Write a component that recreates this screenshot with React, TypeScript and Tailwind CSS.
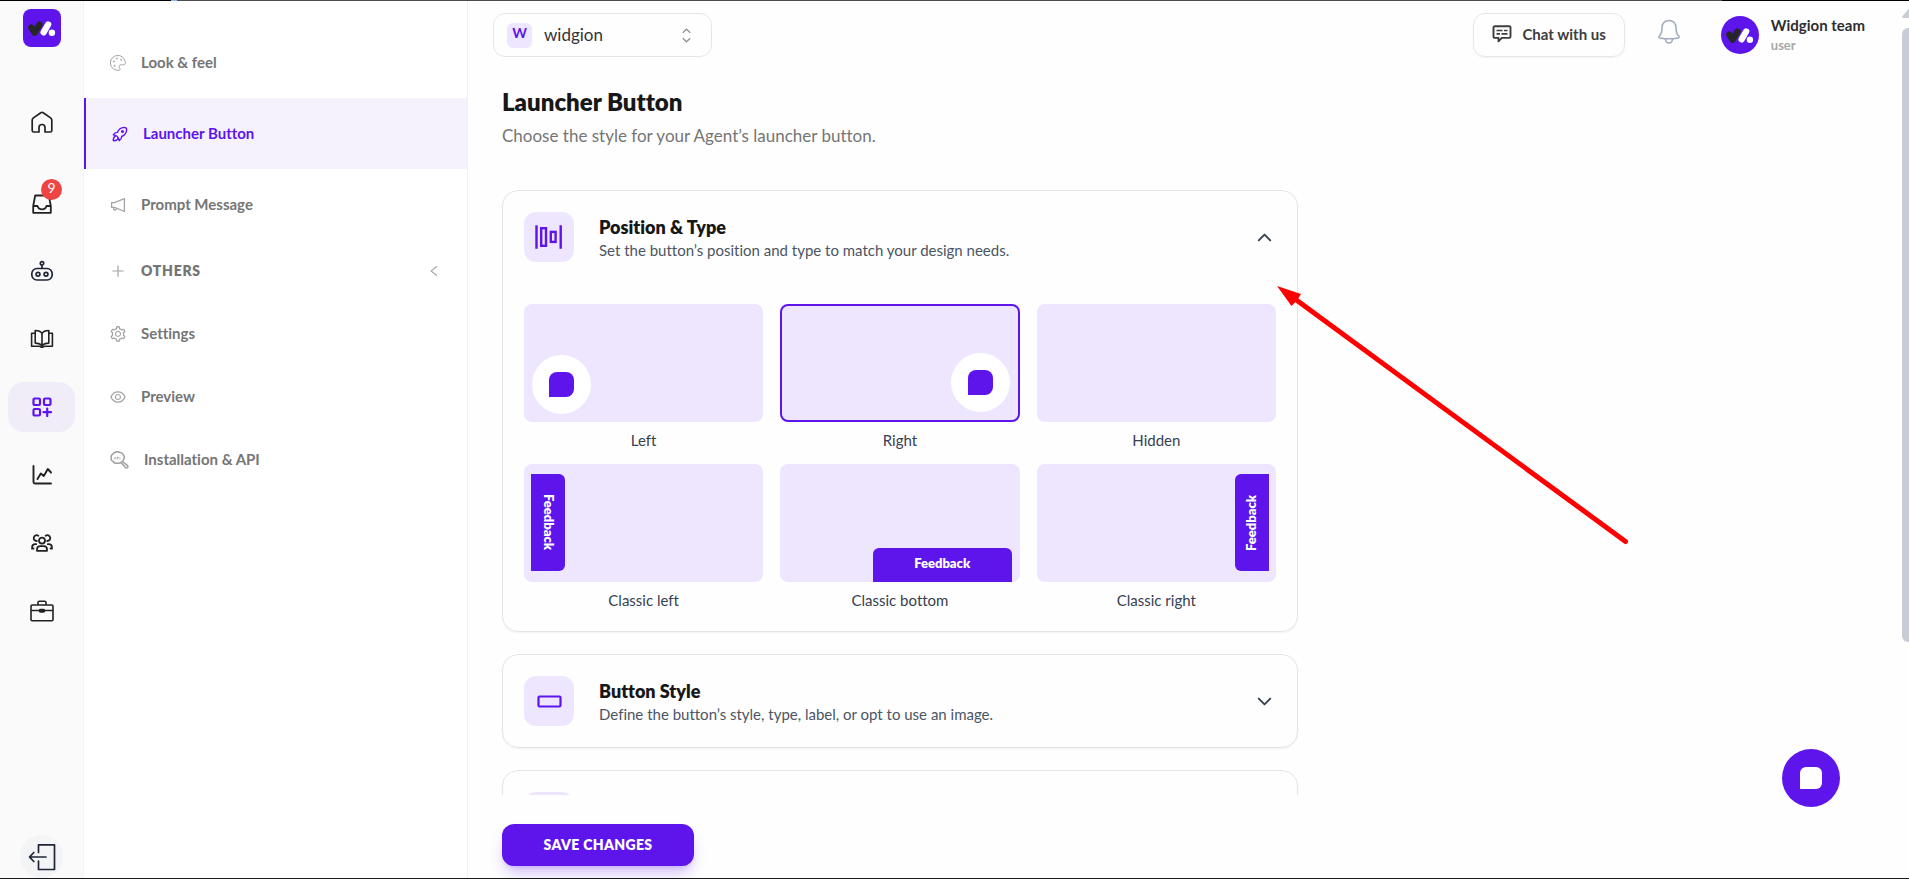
import * as React from "react";
import clsx from "clsx";
import { ChevronDown, ChevronUp } from "lucide-react";
import {
  AiOutlineEye,
  AiOutlineLeft,
  AiOutlineNotification,
  AiOutlinePlus,
  AiOutlineSetting,
} from "react-icons/ai";
import { TbRocket } from "react-icons/tb";

type Position = "left" | "right" | "hidden" | "classic-left" | "classic-bottom" | "classic-right";

function LogoGlyph() {
  return (
    <svg viewBox="0 0 38 38" className="size-full" fill="none" strokeLinecap="round" strokeLinejoin="round">
      <path d="M8.3 18.500l3.400 5.200 4.700-8.200" stroke="#262626" strokeWidth="6.200" />
      <path d="M25.2 15.4l-4.6 8" stroke="#fff" strokeWidth="6.2" />
      <circle cx="28.9" cy="23.8" r="3.2" fill="#fff" />
    </svg>
  );
}

function HomeIcon() {
  return (
    <svg width="24" height="24" viewBox="0 0 24 24" fill="none" stroke="currentColor" strokeWidth="1.7" strokeLinejoin="round">
      <path d="M9 22v-4.5a3 3 0 0 1 6 0V22h5.2a1.6 1.6 0 0 0 1.6-1.6V10.2c0-1-.4-1.7-1.2-2.3L13.2 2.7a2 2 0 0 0-2.4 0L3.4 7.900c-.8.6-1.2 1.3-1.2 2.300v10.200A1.600 1.600 0 0 0 3.800 22z" />
    </svg>
  );
}

function InboxIcon() {
  return (
    <svg width="20" height="20" viewBox="0 0 20 20" fill="none" stroke="currentColor" strokeWidth="1.8" strokeLinejoin="round">
      <path d="M1.2 12L3.2 1.5h13.6l2 10.5v6.8H1.2z" />
      <path d="M1.2 12h4.3c.6 2.3 2.2 3.3 4.5 3.3s3.900-1 4.500-3.300h4.300" />
    </svg>
  );
}

function RobotIcon() {
  return (
    <svg width="24" height="22" viewBox="0 0 24 22" fill="none" stroke="#1f2438" strokeWidth="1.7">
      <rect x="1.8" y="8.5" width="20.4" height="11.5" rx="5.2" />
      <circle cx="8" cy="14.3" r="1.9" />
      <circle cx="16" cy="14.3" r="1.9" />
      <circle cx="12" cy="3.3" r="1.7" />
      <path d="M12 5v3.5" />
    </svg>
  );
}

function BookIcon() {
  return (
    <svg width="24" height="20" viewBox="0 0 24 20" fill="none" stroke="currentColor" strokeWidth="1.6" strokeLinejoin="round">
      <path d="M12 4.5C11 2.6 9 1.5 5.2 1.5v12.6c3.6 0 5.8.8 6.8 3.2 1-2.4 3.2-3.2 6.8-3.2V1.5C15 1.5 13 2.6 12 4.5zM12 4.5v12.8" />
      <path d="M5.2 4.3H1.6v13h7.6c1.2 0 1.6 1 2.8 1s1.6-1 2.8-1h7.6v-13h-3.6" />
    </svg>
  );
}

function WidgetsIcon() {
  return (
    <svg width="20" height="20" viewBox="0 0 20 20" fill="none" stroke="currentColor" strokeWidth="2.2">
      <rect x="1.5" y="1.5" width="6.5" height="6.5" rx="1.2" />
      <rect x="12" y="1.5" width="6.5" height="6.5" rx="1.2" />
      <rect x="1.5" y="12" width="6.5" height="6.5" rx="1.2" />
      <path d="M15.2 11.5v7.5M11.5 15.2H19" strokeLinecap="round" />
    </svg>
  );
}

function ChartIcon() {
  return (
    <svg width="20" height="20" viewBox="0 0 20 20" fill="none" stroke="currentColor" strokeWidth="1.9" strokeLinecap="round" strokeLinejoin="round">
      <path d="M1.5 1v16a1.5 1.5 0 0 0 1.5 1.5h16" />
      <path d="M5.5 14l3.3-5.5 3 2.5 4-7 3.2 3.5" />
    </svg>
  );
}

function UsersIcon() {
  return (
    <svg width="22" height="18" viewBox="0 0 22 18" fill="none" stroke="currentColor" strokeWidth="1.8" strokeLinecap="round">
      <circle cx="11" cy="6.6" r="3" />
      <path d="M6 16.8v-1.3c0-2 1.5-3.3 3.3-3.3h3.4c1.8 0 3.3 1.3 3.3 3.3v1.3z" strokeLinejoin="round" />
      <path d="M5.8 7a2.9 2.9 0 1 1 1.5-5.3M16.2 7a2.9 2.9 0 1 0-1.5-5.3" />
      <path d="M5.2 10.2H4.3c-1.9 0-3.2 1.3-3.2 3.3v1h1.4M16.8 10.2h.9c1.9 0 3.2 1.3 3.2 3.3v1h-1.4" />
    </svg>
  );
}

function BriefcaseIcon() {
  return (
    <svg width="24" height="22" viewBox="0 0 24 22" fill="none" stroke="currentColor" strokeWidth="1.6" strokeLinejoin="round">
      <rect x="1" y="5" width="22" height="15.8" rx="1.2" />
      <path d="M8 5V2.5A1.2 1.2 0 0 1 9.2 1.3h5.6A1.2 1.2 0 0 1 16 2.5V5M1 10.5h22" />
      <rect x="9.5" y="9.5" width="5" height="2.5" rx="1" fill="currentColor" />
    </svg>
  );
}

function LogoutIcon() {
  return (
    <svg width="28" height="28" viewBox="0 0 28 28" fill="none" stroke="#1f2438" strokeWidth="1.7" strokeLinecap="round" strokeLinejoin="round">
      <path d="M10.5 9.5V1.8h16v24.7h-16V18" />
      <path d="M18 14H1.5M5.8 9.5L1.5 14l4.300 4.500" />
    </svg>
  );
}

function PaletteIcon() {
  return (
    <svg width="16" height="16" viewBox="0 0 16 16" fill="none" stroke="currentColor" strokeWidth="1">
      <path d="M15.4 7.5A7.5 7.5 0 1 0 9.3 15.3c1-.2 1-1.1.5-1.9-.9-1.5-.8-3 .9-3.6 1.3-.4 2.5.5 3.6-.1.7-.4 1.1-1.2 1.1-2.2z" />
      <circle cx="7" cy="3.5" r=".6" />
      <circle cx="11.2" cy="4.8" r=".6" />
      <circle cx="3.8" cy="6.5" r=".6" />
      <circle cx="4.5" cy="10.8" r=".6" />
    </svg>
  );
}

function ApiIcon() {
  return (
    <svg width="19" height="18" viewBox="0 0 19 18" fill="none" stroke="currentColor" strokeWidth="1.6" strokeLinejoin="round">
      <path d="M5 1.5c1.500-1.100 3.200-1.100 4.600 0 1.700-.2 3 .5 3.600 2 1.300 1.500 1.400 3 .6 4.500-.1 1.500-.9 2.500-2.300 3-1.300 1.300-2.800 1.600-4.300 1-1.700.5-3.200 0-4-1.500C1.400 9.700.7 8.200 1.200 6.700.9 5 1.500 3.700 2.900 3 3.300 2 4 1.500 5 1.500z" />
      <path d="M11.3 11.7l4.3 5c1.500 1 3-.7 1.900-2l-5-4.200" />
      <path d="M4.3 8.3l.9-2.3.9 2.3M7.2 8.3V6h1v1.2h-1M9.9 6v2.3" strokeWidth=".7" />
    </svg>
  );
}

function ChatIcon() {
  return (
    <svg width="20" height="18" viewBox="0 0 20 18" fill="none" stroke="currentColor" strokeWidth="1.9" strokeLinejoin="round">
      <path d="M2.8 1.3h14.4c.8 0 1.3.5 1.3 1.3v9c0 .8-.5 1.3-1.3 1.3H9.8L6.5 16.3v-3.4H2.8c-.8 0-1.3-.5-1.3-1.3v-9c0-.8.5-1.3 1.3-1.3z" />
      <path d="M4.5 5.5h6M12 5.5h3.5M4.5 8.8h3.5M9.5 8.8h6" strokeWidth="1.7" />
    </svg>
  );
}

function BellIcon() {
  return (
    <svg width="24" height="26" viewBox="0 0 24 26" fill="none" stroke="currentColor" strokeWidth="1.5" strokeLinejoin="round">
      <path d="M12 1.5c-4.3 0-7 3.2-7 7.3 0 4.5-.8 6.5-2.6 8.2-.9.9-.7 1.7.3 1.900 5.800 1.100 12.800 1.100 18.600 0 1-.2 1.200-1 .3-1.900-1.800-1.700-2.600-3.700-2.600-8.200 0-4.100-2.700-7.300-7-7.300z" />
      <path d="M8.500 20c.2 2.500 1.600 4 3.500 4s3.300-1.500 3.500-4" />
    </svg>
  );
}

function SelectorIcon() {
  return (
    <svg width="9" height="15" viewBox="0 0 9 15" fill="none" stroke="currentColor" strokeWidth="1.2">
      <path d="M.8 4.800L4.500 1.200l3.700 3.600M.8 10.200l3.700 3.600 3.700-3.600" />
    </svg>
  );
}

function PositionIcon() {
  return (
    <svg width="28" height="24" viewBox="0 0 28 24" fill="none" stroke="currentColor" strokeWidth="2.4">
      <path d="M1.5.3v23.4M25.7.3v23.4" />
      <rect x="6.2" y="3.2" width="4.8" height="17.6" />
      <rect x="15.8" y="6.900" width="4.8" height="10" />
    </svg>
  );
}

function ButtonIcon() {
  return (
    <svg width="25" height="13" viewBox="0 0 25 13" fill="none" stroke="currentColor" strokeWidth="2.2">
      <rect x="1.5" y="1.5" width="22" height="10" rx="1" />
    </svg>
  );
}

const railItems = [
  { label: "Knowledge", icon: <BookIcon /> },
  { label: "Widgets", icon: <WidgetsIcon />, active: true },
  { label: "Analytics", icon: <ChartIcon /> },
  { label: "Contacts", icon: <UsersIcon /> },
  { label: "Workspace", icon: <BriefcaseIcon /> },
];

const positions: { id: Position; label: string }[] = [
  { id: "left", label: "Left" },
  { id: "right", label: "Right" },
  { id: "hidden", label: "Hidden" },
  { id: "classic-left", label: "Classic left" },
  { id: "classic-bottom", label: "Classic bottom" },
  { id: "classic-right", label: "Classic right" },
];

function RailButton({ label, active, children }: { label: string; active?: boolean; children: React.ReactNode }) {
  return (
    <button
      type="button"
      aria-label={label}
      className={clsx(
        "relative flex h-[50px] w-[67px] shrink-0 items-center justify-center rounded-2xl",
        active ? "bg-[#f0edf9] text-[#5d15eb]" : "text-[#222]"
      )}
    >
      {children}
    </button>
  );
}

function Rail() {
  return (
    <nav className="flex w-[84px] shrink-0 flex-col items-center border-r border-[#f3f3f4] bg-[#fafafa] pt-2">
      <a href="#" aria-label="Widgion" className="size-[38px] shrink-0 overflow-hidden rounded-lg bg-[#5d15eb]">
        <LogoGlyph />
      </a>
      <div className="mt-[50px] flex flex-col items-center gap-8">
        <RailButton label="Home">
          <HomeIcon />
        </RailButton>
        <RailButton label="Inbox">
          <InboxIcon />
          <span className="absolute top-0 left-[33px] flex size-[21px] items-center justify-center rounded-full bg-[#ef4444] pb-1 text-sm text-white">
            9
          </span>
        </RailButton>
      </div>
      <div className="mt-[17px] flex flex-col gap-[18px]">
        <RailButton label="Agents">
          <RobotIcon />
        </RailButton>
        {railItems.map((item) => (
          <RailButton key={item.label} label={item.label} active={item.active}>
            {item.icon}
          </RailButton>
        ))}
      </div>
      <button
        type="button"
        aria-label="Log out"
        className="mt-auto flex size-[43px] shrink-0 items-center justify-center rounded-full bg-[#f3f4f6]"
      >
        <LogoutIcon />
      </button>
    </nav>
  );
}

function MenuLink({
  icon,
  active,
  compact,
  children,
}: {
  icon: React.ReactNode;
  active?: boolean;
  compact?: boolean;
  children: React.ReactNode;
}) {
  return (
    <a
      href="#"
      className={clsx(
        "flex items-center gap-[15px] pl-[26px] text-[15px] font-bold",
        compact ? "h-[63px] pb-0.5" : "h-[71px]",
        active ? "border-l-2 border-[#5d15eb] bg-[#f5f2fd] text-[#5d15eb]" : "text-[#757575]"
      )}
    >
      <span className={active ? "text-[#5d15eb]" : "text-[#a3a3a3]"}>{icon}</span>
      {children}
    </a>
  );
}

function SideMenu() {
  return (
    <aside className="w-[384px] shrink-0 border-r border-[#f1f1f2] bg-white pt-[26px]">
      <MenuLink icon={<PaletteIcon />}>Look &amp; feel</MenuLink>
      <MenuLink icon={<TbRocket size={20} strokeWidth={1.7} className="-mx-0.5" />} active>
        Launcher Button
      </MenuLink>
      <MenuLink icon={<AiOutlineNotification size={18} className="-mx-px" />}>Prompt Message</MenuLink>
      <button
        type="button"
        className="flex h-[63px] w-full items-center gap-[15px] pr-[26px] pb-0.5 pl-[26px] text-sm font-extrabold tracking-wider text-[#757575]"
      >
        <AiOutlinePlus size={16} className="text-[#a3a3a3]" />
        OTHERS
        <AiOutlineLeft size={14} className="ml-auto text-[#a3a3a3]" />
      </button>
      <MenuLink compact icon={<AiOutlineSetting size={18} className="-mx-px" />}>
        Settings
      </MenuLink>
      <MenuLink compact icon={<AiOutlineEye size={18} className="-mx-px" />}>
        Preview
      </MenuLink>
      <MenuLink compact icon={<ApiIcon />}>
        Installation &amp; API
      </MenuLink>
    </aside>
  );
}

function Header() {
  return (
    <header className="flex h-[68px] shrink-0 items-center pr-11 pl-[25px]">
      <button
        type="button"
        className="flex h-11 w-[219px] items-center rounded-xl border border-[#e6e6e8] pr-5 pl-[13px] text-[17px] text-[#333]"
      >
        <span className="mr-3 flex size-[25px] items-center justify-center rounded-md bg-[#eee6ff] pb-1 text-sm font-bold text-[#5d15eb]">
          W
        </span>
        widgion
        <span className="ml-auto text-[#8f8f94]">
          <SelectorIcon />
        </span>
      </button>
      <button
        type="button"
        className="ml-auto flex h-11 items-center gap-[10px] rounded-xl border border-[#e6e6e8] px-[18px] pb-0.5 text-[15px] font-bold text-[#3d3d3d] shadow-xs"
      >
        <ChatIcon />
        Chat with us
      </button>
      <button type="button" aria-label="Notifications" className="ml-8 pb-[6px] text-[#a0aabb]">
        <BellIcon />
      </button>
      <a href="#" className="ml-10 flex items-center gap-3">
        <span className="size-[38px] overflow-hidden rounded-full bg-[#5d15eb]">
          <LogoGlyph />
        </span>
        <span className="flex flex-col gap-0.5 pb-0.5">
          <span className="text-[15px] leading-5 font-bold text-[#2e2e2e]">Widgion team</span>
          <span className="text-[13px] leading-4 font-bold text-[#a8a8a8]">user</span>
        </span>
      </a>
    </header>
  );
}

function SectionHeader({
  icon,
  title,
  description,
  open,
}: {
  icon: React.ReactNode;
  title: string;
  description: string;
  open?: boolean;
}) {
  const Chevron = open ? ChevronUp : ChevronDown;
  return (
    <button type="button" aria-expanded={!!open} className="flex w-full items-center text-left">
      <span className="mr-[25px] flex size-[50px] items-center justify-center rounded-xl bg-[#eee6ff] text-[#5d15eb]">
        {icon}
      </span>
      <span className="flex flex-1 flex-col pt-[3px]">
        <span className="text-lg leading-6 font-extrabold text-[#171717]">{title}</span>
        <span className="text-[15px] leading-[23px] text-[#4b5563]">{description}</span>
      </span>
      <Chevron className="size-[23px] text-[#374151]" />
    </button>
  );
}

function Bubble() {
  return (
    <span className="flex size-[59px] items-center justify-center rounded-full bg-white">
      <span className="size-[25px] rounded-lg rounded-bl-none bg-[#5d15eb]" />
    </span>
  );
}

function PositionPreview({ id }: { id: Position }) {
  const tag = "flex items-center justify-center bg-[#5d15eb] text-[13px] font-extrabold text-white";
  switch (id) {
    case "left":
      return (
        <span className="flex size-full items-end p-2">
          <Bubble />
        </span>
      );
    case "right":
      return (
        <span className="flex size-full items-end justify-end p-2">
          <Bubble />
        </span>
      );
    case "classic-left":
      return (
        <span className="flex size-full items-center pb-0.5 pl-[7px]">
          <span className={clsx(tag, "h-[97px] w-[34px] rounded-r-md [writing-mode:vertical-rl]")}>Feedback</span>
        </span>
      );
    case "classic-bottom":
      return (
        <span className="flex size-full items-end justify-end pr-2">
          <span className={clsx(tag, "h-[34px] w-[139px] rounded-t-md pb-0.5")}>Feedback</span>
        </span>
      );
    case "classic-right":
      return (
        <span className="flex size-full items-center justify-end pr-[7px] pb-0.5">
          <span className={clsx(tag, "h-[97px] w-[34px] rotate-180 rounded-r-md [writing-mode:vertical-rl]")}>
            Feedback
          </span>
        </span>
      );
    default:
      return null;
  }
}

function ScrollBar() {
  return (
    <div className="absolute top-0 right-0 flex w-[7px] flex-col items-end overflow-hidden" aria-hidden="true">
      <svg width="7" height="28" viewBox="0 0 7 28" fill="#c8ccd6">
        <path d="M7 8.5L.4 16.2c-.6.9-.3 1.8.8 1.8H7z" />
      </svg>
      <span className="h-[614px] w-[7px] rounded-l-md bg-[#c8ccd6]" />
    </div>
  );
}

export default function App() {
  const [position, setPosition] = React.useState<Position>("right");

  return (
    <div className="relative flex h-screen flex-col overflow-hidden border-b border-[#1a1a1a] bg-[#fefefe] font-['Lato',sans-serif] [font-variant-ligatures:none]">
      {/* Loading bar */}
      <div className="flex h-px shrink-0 bg-[#4d4d4d]">
        <span className="w-[171px] bg-black" />
        <span className="w-[6px] bg-[#8ab4f8]" />
        <span className="ml-auto w-[187px] bg-black" />
      </div>

      <div className="flex min-h-0 flex-1">
        <Rail />
        <SideMenu />

        <main className="flex min-w-0 flex-1 flex-col">
          <Header />

          <div className="min-h-0 flex-1 overflow-hidden pl-[34px]">
            <h1 className="mt-[17px] text-2xl leading-8 font-extrabold text-[#171717]">Launcher Button</h1>
            <p className="mt-1 text-[17px] leading-7 text-[#757575]">
              Choose the style for your Agent’s launcher button.
            </p>

            <div className="mt-10 flex max-w-[796px] flex-col gap-[22px]">
              <section className="rounded-2xl border border-[#e5e5e7] px-[21px] pt-[21px] pb-[7px] shadow-xs">
                <SectionHeader
                  open
                  icon={<PositionIcon />}
                  title="Position &amp; Type"
                  description="Set the button’s position and type to match your design needs."
                />
                <div className="mt-[42px] grid grid-cols-3 gap-x-[17px]">
                  {positions.map((item) => (
                    <button
                      key={item.id}
                      type="button"
                      aria-pressed={position === item.id}
                      onClick={() => setPosition(item.id)}
                      className="flex h-40 flex-col text-[15px] text-[#374151]"
                    >
                      <span
                        className={clsx(
                          "h-[118px] w-full overflow-hidden rounded-lg bg-[#eee6ff]",
                          position === item.id && "border-2 border-[#5d15eb]"
                        )}
                      >
                        <PositionPreview id={item.id} />
                      </span>
                      <span className="mt-1.5 w-full text-center leading-6">{item.label}</span>
                    </button>
                  ))}
                </div>
              </section>

              <section className="rounded-2xl border border-[#e5e5e7] p-[21px] shadow-xs">
                <SectionHeader
                  icon={<ButtonIcon />}
                  title="Button Style"
                  description="Define the button’s style, type, label, or opt to use an image."
                />
              </section>

              <section className="rounded-2xl border border-[#e5e5e7] p-[21px] shadow-xs">
                <SectionHeader icon={<ButtonIcon />} title="" description="" />
              </section>
            </div>
          </div>

          <footer className="flex h-[83px] shrink-0 items-start pt-[29px] pl-[34px]">
            <button
              type="button"
              className="h-[42px] w-48 rounded-xl bg-[#5d15eb] text-sm font-extrabold tracking-wide text-white shadow-lg shadow-[#5d15eb]/25"
            >
              SAVE CHANGES
            </button>
          </footer>
        </main>
      </div>

      <ScrollBar />

      <button
        type="button"
        aria-label="Open chat"
        className="absolute right-[69px] bottom-[71px] flex size-[58px] items-center justify-center rounded-full bg-[#5d15eb]"
      >
        <span className="size-[22px] rounded-md rounded-bl-none bg-white" />
      </button>

      {/* Callout arrow */}
      <svg className="pointer-events-none absolute top-[286px] left-[1277px]" width="354" height="260" viewBox="0 0 354 260">
        <path d="M18 13L348.5 255.5" stroke="#f00" strokeWidth="5" strokeLinecap="round" />
        <path d="M0 0l24 8-4 6.5-5.5 5.5z" fill="#f00" />
      </svg>
    </div>
  );
}
